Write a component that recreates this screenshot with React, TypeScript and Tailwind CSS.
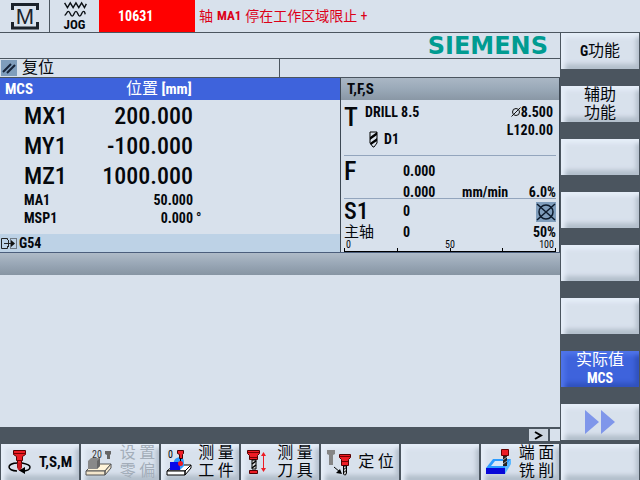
import type { ReactNode } from "react";

type SoftkeyProps = {
  children?: ReactNode;
  label?: string;
  active?: boolean;
  disabled?: boolean;
};

const Softkey = ({ children, label, active, disabled }: SoftkeyProps) => {
  const look = active
    ? "bg-[#3e63dc] text-white shadow-[inset_4px_4px_4px_#4f74ea,inset_-4px_-4px_4px_#3152bd]"
    : "bg-[#d8e1ec] shadow-[inset_4px_4px_4px_#e6eef9,inset_-3px_-5px_4px_#b4bfcc]";

  return (
    <button
      type="button"
      aria-label={label}
      disabled={disabled}
      className={`flex h-9 min-w-0 items-center justify-center text-center text-[16px] leading-[18px] ${look} ${disabled ? "text-[#a3adb9]" : ""}`}
    >
      {children}
    </button>
  );
};

const MachineIcon = () => (
  <svg width="30" height="28" viewBox="0 0 30 28" fill="none" stroke="#1b222b" strokeWidth="3">
    <path d="M2.500 8V2.500H27.500V8M2.500 20V26H27.500V20" />
    <text x="15" y="22" textAnchor="middle" fontSize="22" fill="#1b222b" stroke="none" className="font-['Liberation_Sans',sans-serif]">M</text>
  </svg>
);

const JogIcon = () => (
  <svg width="24" height="18" viewBox="0 0 24 18" fill="none" stroke="#0a0f14" strokeWidth="1.500">
    <path d="M1 2l3 5 3-5 3 5 3-5 3 5 3-5 3 5 2-4" />
    <path d="M1 15c2 0 2-4 4-4s2 5 4 5 2-5 4-5 2 5 4 5 2-5 4-5 1 2 2 3" />
  </svg>
);

const ResetIcon = () => (
  <svg width="16" height="16" viewBox="0 0 16 16" stroke="#17243a" strokeWidth="2">
    <rect width="16" height="16" fill="#7f9dbc" stroke="none" />
    <path d="M2 12L10 4M6 13l8-8" />
  </svg>
);

const DrillIcon = () => (
  <svg width="9" height="17" viewBox="0 0 9 17">
    <path d="M1 1h7v11l-3 4H4l-3-4z" fill="#dce4ed" stroke="#000" />
    <path d="M1 6l7-5v3L1 9zM1 12l7-5v3l-6 4z" />
  </svg>
);

const DiameterIcon = () => (
  <svg width="10" height="10" viewBox="0 0 10 10" fill="none" stroke="#111">
    <circle cx="5" cy="5" r="3.500" />
    <path d="M.5 9.500l9-9" />
  </svg>
);

const SpindleStopIcon = () => (
  <svg width="20" height="20" viewBox="0 0 20 20" fill="none" stroke="#0c1a2c" strokeWidth="1.500">
    <rect width="20" height="20" fill="#7f9dbc" stroke="none" />
    <circle cx="10" cy="10" r="7" />
    <path d="M1 2l18 16M1 18L19 2" />
  </svg>
);

const OffsetIcon = () => (
  <svg width="17" height="13" viewBox="0 0 17 13" fill="none" stroke="#222">
    <path d="M6.500 3V1.500H.5v10h6V9M3 6.500h9" />
    <path d="M9.500 1.500h6v10h-6z" strokeDasharray="1 1" />
    <path d="M10 3l4 3.500L10 10z" fill="#111" stroke="none" />
    <path d="M7.500 3v7" />
  </svg>
);

const ToolSpindleIcon = () => (
  <svg width="23" height="26" viewBox="0 0 23 26">
    <path d="M10 14C4 14 1 16 1 18s3 4 8 4M14 14c5 1 8 2 8 4 0 3-3 4-8 4" fill="none" stroke="#000" strokeWidth="1.500" />
    <path d="M5.500 1.500h12v4l-3 2v4h-1v7h-4v-7h-1v-4l-3-2z" fill="#ed1c24" stroke="#500" />
    <path d="M5 4.500h13M9 11.500h5" stroke="#700" />
    <path d="M9.500 14h4v6l-2 2-2-2z" fill="#c71820" />
    <path d="M17 18v7l-6-3.500z" />
  </svg>
);

const ZeroOffsetIcon = () => (
  <svg width="27" height="27" viewBox="0 0 27 27">
    <text x="7" y="9" fontSize="10" fill="#333">20</text>
    <path d="M20 2h6v3l-1 1v4h-3V6l-2-1z" fill="#666" />
    <path d="M1 22l7-7h18l-6 7z" fill="#fff4d9" stroke="#555" />
    <path d="M1 22h19v4H1zM20 22l6-7v4l-6 7z" fill="#f3e6cc" stroke="#555" />
    <path d="M3 12l3-3h9v8l-3 3H3z" fill="#898989" />
    <path d="M12 12l3-3v8l-3 3z" fill="#666" />
  </svg>
);

const MeasureWorkIcon = () => (
  <svg width="26" height="27" viewBox="0 0 26 27">
    <path d="M1 22l7-6h17l-6 6z" fill="#fff" stroke="#000" />
    <path d="M1 22h18v4H1zM19 22l6-6v3l-6 7z" fill="#fff" stroke="#000" />
    <path d="M8 12c1-3 4-4 7-4 3 1 3 4 3 9l-4 4H6z" fill="#2c9cff" />
    <path d="M4 13h8c2 2 2 5 2 8H4z" fill="#0808e8" />
    <text x="2" y="9" fontSize="10">0</text>
    <path d="M11.500 1.500h6v3l-1 1v4h-3v-4l-2-1z" fill="#ed1c24" stroke="#400" />
    <path d="M14.500 9v4" stroke="#000" />
    <circle cx="14.500" cy="14.500" r="2.500" fill="#ed1c24" />
  </svg>
);

const MeasureToolIcon = () => (
  <svg width="20" height="27" viewBox="0 0 20 27">
    <path d="M.5 1.500h12v3l-2 2v4h-8v-4l-2-2z" fill="#ed1c24" stroke="#500" />
    <path d="M1 3.500h11M3 8.500h7" stroke="#700" />
    <path d="M5 11h4v9H5z" fill="#ddd" stroke="#000" />
    <path d="M5 15l4-3M5 19l4-3" stroke="#000" strokeWidth="1.500" />
    <path d="M2.500 21.500h8v3h-8z" fill="#ed1c24" stroke="#500" />
    <path d="M16.500 4v17" stroke="#ed1c24" />
    <path d="M14 7l2.500-4L19 7zM14 19l2.500 4 2.500-4z" fill="#ed1c24" />
  </svg>
);

const PositionIcon = () => (
  <svg width="26" height="27" viewBox="0 0 26 27">
    <path d="M1 1h8v4L7 6v10H3V6L1 5z" fill="#858585" />
    <path d="M8 18l6 5" stroke="#000" />
    <path d="M16 25l-6-1 4-4z" />
    <path d="M13.500 5.500h11v3l-2 2v6h-7v-6l-2-2z" fill="#ed1c24" stroke="#500" />
    <path d="M14 7.500h10M16 12.500h6" stroke="#700" />
    <path d="M17.500 17h3v7l-1 2h-1l-1-1z" fill="#ccc" stroke="#000" />
    <path d="M17 21l4-3M17 24l4-3" stroke="#000" />
  </svg>
);

const FaceMillIcon = () => (
  <svg width="25" height="26" viewBox="0 0 25 26">
    <path d="M0 19l7-9h18l-6 9z" fill="#2c9cff" />
    <path d="M5 17l4-5h12l-4 5z" fill="#d8e8f8" />
    <path d="M19 19l6-9v5l-6 10z" fill="#5ab8ff" />
    <path d="M0 19h19v6H0z" fill="#0808d8" />
    <path d="M15.500.5h7v6h-7z" fill="#ed1c24" stroke="#600" />
    <path d="M17 7h4v10h-4z" fill="#222" />
    <path d="M17 11l4-3M17 15l4-3" stroke="#aaa" />
  </svg>
);

const axes = [
  { name: "MX1", value: "200.000", unit: "", large: true },
  { name: "MY1", value: "-100.000", unit: "", large: true },
  { name: "MZ1", value: "1000.000", unit: "", large: true },
  { name: "MA1", value: "50.000", unit: "", large: false },
  { name: "MSP1", value: "0.000", unit: "°", large: false },
];

const StatusHeader = () => (
  <header className="flex h-[33px] border-b border-[#4b555f]">
    <div className="flex w-[50px] items-center justify-center border-r border-[#4b555f]">
      <MachineIcon />
    </div>
    <div className="flex w-[49px] flex-col items-center pt-px">
      <JogIcon />
      <span className="text-[13px] leading-[14px] font-bold">JOG</span>
    </div>
    <div className="flex w-24 items-center bg-[#ff0000] pl-[19px] text-[14px] font-bold text-white">10631</div>
    <p className="flex flex-1 items-center gap-1 pl-1 text-[14px] text-[#dc0018]">
      轴 <b className="text-[13px]">MA1</b> 停在工作区域限止 +
    </p>
  </header>
);

const AxisPanel = () => (
  <section className="flex flex-col">
    <h2 className="flex h-[22px] items-center bg-[#3e63dc] px-[5px] text-[15px] font-bold text-white">
      <span className="w-[121px]">MCS</span>
      <span><span className="text-[16px] font-normal">位置</span> [mm]</span>
    </h2>
    <table className="mt-px w-[206px] table-fixed">
      <tbody>
        {axes.map((axis) => (
          <tr
            key={axis.name}
            className={axis.large ? "h-[30px] text-[24px] leading-[30px] font-medium" : "h-[18px] text-[14px] leading-[18px] font-bold"}
          >
            <th scope="row" className={`w-20 pl-6 text-left ${axis.large ? "font-medium" : "font-bold"}`}>{axis.name}</th>
            <td className="text-right">{axis.value}</td>
            <td className="w-[13px] pl-[3px]">{axis.unit}</td>
          </tr>
        ))}
      </tbody>
    </table>
    <div className="mt-auto flex h-[18px] items-center gap-px bg-[#bdd2e6] pl-px text-[14px] font-bold">
      <OffsetIcon />
      G54
    </div>
  </section>
);

const LoadScale = () => (
  <div className="border-b border-black">
    <div className="grid h-2 grid-cols-3 px-0.5 text-[10px] leading-[10px] font-normal">
      <span>0</span>
      <span className="text-center">50</span>
      <span className="text-right">100</span>
    </div>
    <div className="flex h-[3px] justify-between">
      <i className="w-px bg-black" />
      <i className="w-px bg-black" />
      <i className="w-px bg-black" />
      <i className="w-px bg-black" />
      <i className="w-px bg-black" />
    </div>
  </div>
);

const ToolPanel = () => (
  <section className="flex flex-col border-x border-[#3d4854] text-[14px] font-bold">
    <h2 className="flex h-[22px] items-center bg-linear-to-b from-[#aab7c5] via-[#9aa9b8] to-[#8997a5] pl-1.5 text-[15px]">T,F,S</h2>
    <div className="mx-[3px] flex h-14 border-b border-[#93a5bd] pt-[3px]">
      <span className="w-[21px] text-[26px] leading-[28px] font-medium">T</span>
      <div className="flex-1">
        <p className="leading-[18px]">DRILL 8.5</p>
        <p className="mt-[9px] flex items-center gap-1.5 pl-1 leading-[18px]"><DrillIcon /> D1</p>
      </div>
      <div className="pr-[3px] text-right leading-[18px]">
        <p className="flex items-center justify-end"><DiameterIcon />8.500</p>
        <p>L120.00</p>
      </div>
    </div>
    <div className="mx-[3px] flex h-[43px] border-b border-[#93a5bd]">
      <span className="w-[59px] text-[26px] leading-[30px] font-medium">F</span>
      <div className="flex-1 pt-[5px] leading-[21px]">
        <p>0.000</p>
        <p className="flex"><span className="w-[59px]">0.000</span><span className="flex-1">mm/min</span>6.0%</p>
      </div>
    </div>
    <div className="mx-[3px]">
      <div className="flex h-[25px] items-center">
        <span className="w-[59px] text-[24px] leading-[25px] font-medium">S1</span>
        <span className="flex-1">0</span>
        <SpindleStopIcon />
      </div>
      <div className="flex h-4 items-center leading-[16px]">
        <span className="w-[59px] text-[15px] font-normal">主轴</span>
        <span className="flex-1">0</span>
        <span>50%</span>
      </div>
      <LoadScale />
    </div>
  </section>
);

const App = () => {
  return (
    <main className="flex min-h-screen flex-col bg-[#d8e1ec] font-['Roboto_Condensed','Liberation_Sans','Noto_Sans_CJK_SC',sans-serif] text-[#05080c]">
      <StatusHeader />

      <div className="flex flex-1">
        <div className="flex min-w-0 flex-1 flex-col">
          <div className="flex h-[26px] items-center justify-end border-b border-[#4b555f] pt-px pr-3 font-['DejaVu_Sans',sans-serif] text-[24px] leading-[25px] font-bold text-[#009b91]">
            SIEMENS
          </div>
          <div className="grid h-[19px] grid-cols-2 border-b border-[#4b555f]">
            <div className="flex items-center gap-[5px] border-r border-[#4b555f] pl-px text-[16px] leading-[18px]">
              <ResetIcon />
              复位
            </div>
          </div>
          <div className="grid h-[175px] grid-cols-[minmax(0,17fr)_minmax(0,11fr)] border-b border-[#4b5e7c]">
            <AxisPanel />
            <ToolPanel />
          </div>
          <div className="h-[22px] bg-linear-to-b from-[#afbbc8] via-[#99a7b6] to-[#8795a3]" />
          <div className="flex-1" />
          <div className="flex h-3.5 items-end justify-end gap-0.5 bg-[#4b555f]">
            <button type="button" aria-label="More" className="flex h-3 w-[19px] items-center justify-center bg-[#cbd4de]">
              <svg width="9" height="9" viewBox="0 0 9 9" fill="none" stroke="#000" strokeWidth="2">
                <path d="M1 1l6 3.500L1 8" />
              </svg>
            </button>
            <div className="h-3 w-2.5 bg-[#d8e1ec]" />
          </div>
        </div>

        <nav className="flex w-20 flex-col gap-[17px] bg-[#4b555f] px-px">
          <Softkey><span><b className="text-[14px]">G</b>功能</span></Softkey>
          <Softkey>辅助<br />功能</Softkey>
          <Softkey label="Softkey 3" />
          <Softkey label="Softkey 4" />
          <Softkey label="Softkey 5" />
          <Softkey label="Softkey 6" />
          <Softkey active><span>实际值<br /><b className="text-[14px]">MCS</b></span></Softkey>
          <Softkey label="Next">
            <svg width="30" height="24" viewBox="0 0 30 24" fill="#7f96ea">
              <path d="M0 0l14 12L0 24zM16 0l14 12-14 12z" />
            </svg>
          </Softkey>
        </nav>
      </div>

      <nav className="grid grid-cols-8 gap-0.5 bg-[#4b555f] px-px pt-[3px]">
        <Softkey><ToolSpindleIcon /><b className="ml-2 text-[15px]">T,S,M</b></Softkey>
        <Softkey disabled><ZeroOffsetIcon /><span className="ml-2">设 置<br />零 偏</span></Softkey>
        <Softkey><MeasureWorkIcon /><span className="ml-1.5">测 量<br />工 件</span></Softkey>
        <Softkey><MeasureToolIcon /><span className="ml-2.5">测 量<br />刀 具</span></Softkey>
        <Softkey><PositionIcon /><span className="ml-1.5">定 位</span></Softkey>
        <Softkey label="Softkey 14" />
        <Softkey><FaceMillIcon /><span className="ml-2">端 面<br />铣 削</span></Softkey>
        <Softkey label="Softkey 16" />
      </nav>
    </main>
  );
};

export default App;
